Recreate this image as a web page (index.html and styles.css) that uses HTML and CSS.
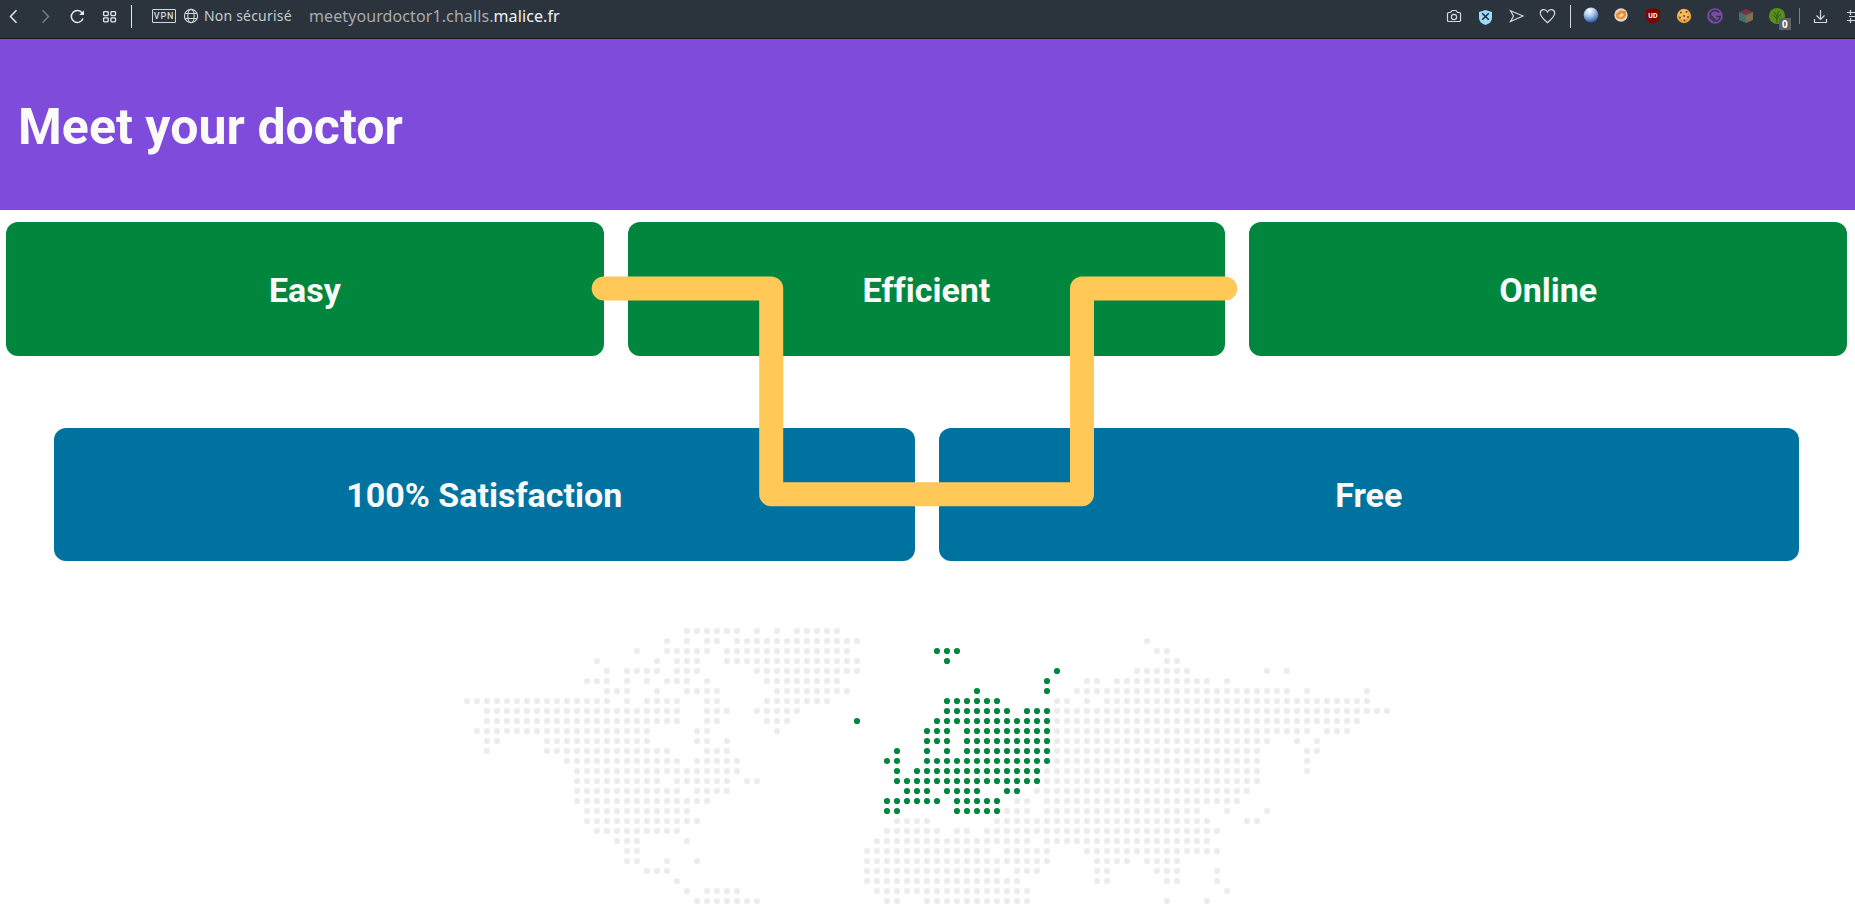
FILE: index.html
```html
<!DOCTYPE html>
<html lang="fr">
<head>
<meta charset="utf-8">
<title>Meet your doctor</title>
<link rel="stylesheet" href="styles.css">
</head>
<body>
<div class="browser-bar">
  <svg class="icon nav-icons" width="160" height="38" viewBox="0 0 160 38" fill="none" stroke="#e4e8ea" stroke-width="1.5">
    <path d="M16.5 10.300 10.5 16.5 16.5 22.700"/>
    <path d="M42.500 10.300 48.500 16.500 42.500 22.700" stroke="#6f7a81"/>
    <path d="M82.200 13A6 6 0 1 0 83 18.500"/><path d="M84 10.200V15H79.200Z" fill="#e4e8ea" stroke="none"/>
    <g stroke-width="1.300"><rect x="103.600" y="11.600" width="4.600" height="4" rx=".8"/><rect x="110.900" y="11.600" width="4.600" height="4" rx=".8"/><rect x="103.600" y="17.900" width="4.600" height="4" rx=".8"/><rect x="110.900" y="17.900" width="4.600" height="4" rx=".8"/></g>
    <path d="M131.500 5V28" stroke-width="1"/>
  </svg>
  <span class="vpn">VPN</span>
  <svg class="icon globe" width="16" height="16" viewBox="0 0 16 16" fill="none" stroke="#d3d8da" stroke-width="1.100"><circle cx="8" cy="8" r="6.600"/><ellipse cx="8" cy="8" rx="3.200" ry="6.600"/><path d="M2.200 5.500H13.800M2.200 10.500H13.800"/></svg>
  <span class="security">Non sécurisé</span>
  <span class="address">meetyourdoctor1.challs.<b>malice.fr</b></span>
  <svg class="icon tools" width="415" height="38" viewBox="1440 0 415 38" fill="none" stroke="#d3d8da" stroke-width="1.200">
    <defs>
      <radialGradient id="orb" cx=".38" cy=".22" r=".8"><stop offset="0" stop-color="#fff"/><stop offset=".45" stop-color="#a9c8ee"/><stop offset="1" stop-color="#2c57a5"/></radialGradient>
    </defs>
    <path d="M1448.500 12.500H1450.500L1452 10.500H1456L1457.500 12.500H1459.500Q1460.500 12.500 1460.500 13.500V20.500Q1460.500 21.500 1459.500 21.500H1448.500Q1447.500 21.500 1447.500 20.500V13.500Q1447.500 12.500 1448.500 12.500Z"/><circle cx="1454" cy="17" r="2.600"/>
    <path d="M1479 12 1485.500 10 1492 12V18Q1492 23 1485.500 25Q1479 23 1479 18Z" fill="#9adcff" stroke="none"/><path d="M1482.200 13.200 1488.800 19.800M1488.800 13.200 1482.200 19.800" stroke="#22313a" stroke-width="1.600"/>
    <path d="M1510.500 10.800 1523 16 1510.500 21.500 1513.500 16Z"/>
    <path d="M1547.500 22.700C1544 19.500 1540.300 16.500 1540.300 13.200C1540.300 9.300 1545.500 8 1547.500 12C1549.500 8 1554.700 9.300 1554.700 13.200C1554.700 16.500 1551 19.500 1547.500 22.700Z"/>
    <path d="M1570.500 5V28" stroke-width="1"/>
    <circle cx="1591" cy="15" r="7.400" fill="url(#orb)" stroke="none"/>
    <g stroke="none">
    <circle cx="1621" cy="15" r="6.700" fill="#d9d5cc"/><path d="M1616 14 1620 10.500 1626 11 1626 16 1622 19.500 1616.500 18Z" fill="#ee8a28"/><path d="M1618 16 1622 13 1624 15 1621 17.500Z" fill="#fbd7a8"/>
    <path d="M1646 10 1653 8 1660 10V16Q1660 21 1653 24Q1646 21 1646 16Z" fill="#800000"/>
    <circle cx="1684" cy="16" r="7.200" fill="#eaa43f"/><circle cx="1683.500" cy="14.500" r="5" fill="#f3bd68"/><g fill="#7b431c"><circle cx="1681" cy="12.500" r="1"/><circle cx="1686.500" cy="12" r="1"/><circle cx="1684" cy="16" r="1"/><circle cx="1688" cy="17" r="1"/><circle cx="1680" cy="17.500" r="1"/><circle cx="1684.500" cy="20.500" r="1"/></g>
    </g>
    <circle cx="1715" cy="16" r="7.800" fill="#7a4aa8" stroke="none"/>
    <path d="M1719.300 12.500A5.500 5.500 0 0 0 1709.800 14.500L1716.500 21.200A5.500 5.500 0 0 0 1720.300 16.500H1716.500M1709.300 16.500 1714.500 21.700" stroke="#2b343d" stroke-width="1.300"/>
    <g stroke="none"><path d="M1739 12 1746 9 1753 12 1746 15Z" fill="#7c2f45"/><path d="M1739 12 1746 15V23L1739 20Z" fill="#3d746d"/><path d="M1753 12 1746 15V23L1753 20Z" fill="#7d6f53"/>
    <circle cx="1777" cy="16" r="8" fill="#578f1c"/></g>
    <path d="M1777 23V16M1777 19 1773 15M1777 18 1781 14M1774 12 1777 16 1779 11" stroke="#2d5512" stroke-width="1"/>
    <path d="M1799.500 8V24" stroke="#79838a" stroke-width="1"/>
    <path d="M1820.500 10V19M1816.500 15.500 1820.500 19.500 1824.500 15.500M1814.500 19V22.500H1826.500V19"/>
    <path d="M1847 12.500H1855M1849 16.500H1855M1847 20.500H1855M1850.500 10V15M1850.500 18V23"/>
    <rect x="1779" y="18" width="12" height="12" fill="#5e6164" stroke="none"/>
    <text class="badge-text" x="1782" y="27.500">0</text><text class="shield-text" x="1648.300" y="18">UD</text>
  </svg>
</div>
<header class="hero"><h1>Meet your doctor</h1></header>
<main class="content">
  <section class="row row-top">
    <div class="card easy">Easy</div><div class="card easy">Efficient</div><div class="card easy">Online</div>
  </section>
  <section class="row row-bottom">
    <div class="card free">100% Satisfaction</div><div class="card free">Free</div>
  </section>
  <svg class="connector" width="1855" height="360" viewBox="0 210 1855 360"><path d="M603.700 288.600H771.200V494.200H1082V288.600H1225.200"/></svg>
  <svg class="map" id="map" width="936" height="279" viewBox="462 625 936 279"></svg>
</main>
<script src="map.js"></script>
</body>
</html>
```
FILE: styles.css
```css
body { margin: 0; background: #fff; font-family: Roboto, sans-serif; overflow: hidden; height: 904px; }
.browser-bar { box-sizing: border-box; height: 39px; display: flex; align-items: flex-start; background: #2b343d; border-bottom: 1px solid #14181b; font-family: "Noto Sans", sans-serif; white-space: nowrap; }
.icon { display: block; flex: none; }
.nav-icons { margin-right: -8px; }
.vpn { box-sizing: border-box; flex: none; width: 24px; height: 14px; margin-top: 9px; border: 1px solid #d3d8da; border-radius: 1px; color: #d3d8da; font: 500 9px/13px Roboto, sans-serif; letter-spacing: .8px; text-align: center; }
.globe { margin: 8px 0 0 7px; }
.security { width: 105px; margin-left: 5px; color: #c5cacd; font-size: 14px; line-height: 32px; letter-spacing: .2px; }
.address { color: #a9abac; font-size: 16px; line-height: 32px; letter-spacing: .1px; }
.address b { color: #f0f3f4; font-weight: 400; }
.tools { margin-left: auto; }
.badge-text { fill: #fff; stroke: none; font: 700 10px "Noto Sans", sans-serif; }
.shield-text { fill: #fff; stroke: none; font: 700 7px Roboto, sans-serif; }
.hero { height: 171px; box-sizing: border-box; padding: 58px 18px 0; background: #7f4bda; color: #fafafa; }
.hero h1 { margin: 0; font-size: 50px; line-height: 60px; font-weight: 700; letter-spacing: .05px; }
.content { position: relative; padding-top: 12px; }
.row { display: grid; gap: 24px; }
.row-top { grid-template-columns: repeat(3, 1fr); margin: 0 8px 72px 6px; }
.row-bottom { grid-template-columns: repeat(2, 1fr); margin: 0 56px 64px 54px; }
.card { height: 134px; display: flex; align-items: center; justify-content: center; border-radius: 12px; color: #fafafa; font-size: 34px; font-weight: 700; font-variant-ligatures: none; box-sizing: border-box; padding-top: 2px; }
.easy { background: #00873d; }
.free { height: 133px; padding-top: 0; background: #0072a0; }
.connector { position: absolute; left: 0; top: 0; fill: none; stroke: #ffc857; stroke-width: 24px; stroke-linecap: round; stroke-linejoin: round; }
.map { display: block; margin-left: 462px; }
.land { fill: #ececec; }
.europe { fill: #00873d; }
```
FILE: map.js
```js
// Each row: columns of ordinary land dots | columns of highlighted dots.
const rows = [
  "22-27,29,31,33-37|",
  "20,22,24-25,27-39,68|",
  "17,20-24,26-38,69-70|47-49",
  "13,19,21-23,26-39,70-71|48",
  "14,16-19,21-23,29-39,67-72,80,82|59",
  "12-14,16,18,20-22,24,30-37,62-63,65-74,76|58",
  "14-16,19,22-25,31-38,61-82,84,90|51,58",
  "0-14,16,18-21,24-25,30-36,59-60,62,64-90|48-53",
  "2-21,24-26,29-33,59-92|48-54,56-58",
  "2-21,24-25,30-32,59-89|39,47-58",
  "1-18,23-24,31,59-84,86-88|46-48,50-58",
  "2-3,8-18,23-24,26,59-80,83,85|46-48,50-58",
  "2,8-20,24-26,59-79,84-85|43,46,48,50-58",
  "10-21,23-27,59-79,84|42-43,46-58",
  "11-27,58-79,84|43,45-57",
  "11-19,21-26,28-29,58-79|43-57",
  "11-21,23-26,57-78|44-46,48-51,54-55",
  "11-24,55-56,58-77|42-47,49-53",
  "12-22,54-56,58-73,76,80|42-43,49-53",
  "12-23,43-46,53-74,78-79|",
  "13-21,42-47,49-50,52-75|",
  "15-17,22,41-56,58-74|",
  "16-17,40-52,54-58,62-75|",
  "16-17,20,23,40-58,63-66,68-71|",
  "18-20,40-53,55-57,63-64,69-71,75|",
  "21,40-55,63-64,70-71,75|",
  "22,24-27,41-56,76|",
  "23-29,42-43,46-56,70,74|"
];
const map = document.getElementById("map");
function plot(list, row, name) {
  if (!list) return;
  for (const part of list.split(",")) {
    const [first, last = first] = part.split("-").map(Number);
    for (let col = first; col <= last; col++) {
      const dot = document.createElementNS("http://www.w3.org/2000/svg", "circle");
      dot.setAttribute("cx", 467 + col * 10);
      dot.setAttribute("cy", 631 + row * 10);
      dot.setAttribute("r", 3.1);
      dot.setAttribute("class", name);
      map.appendChild(dot);
    }
  }
}
rows.forEach((line, row) => {
  const [land, europe] = line.split("|");
  plot(land, row, "land");
  plot(europe, row, "europe");
});
```
